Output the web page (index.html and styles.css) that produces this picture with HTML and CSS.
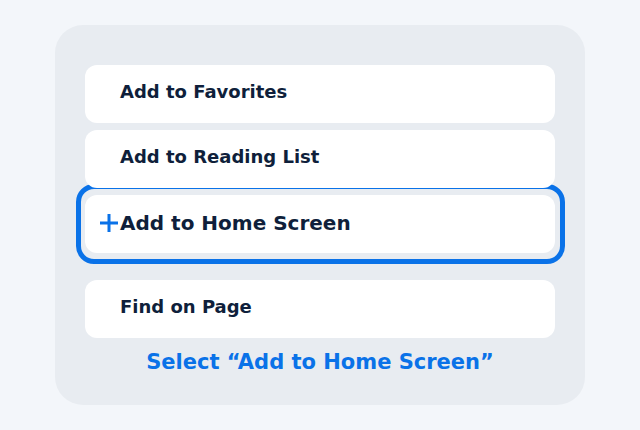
FILE: index.html
```html
<!DOCTYPE html>
<html lang="en">
  <head>
    <meta charset="UTF-8" />
    <meta name="viewport" content="width=device-width, initial-scale=1.0" />
    <title>Add to Home Screen</title>
    <link rel="stylesheet" href="styles.css">
  </head>
  <body>
    <div class="card">
      <div class="menu-item">Add to Favorites</div>
      <div class="menu-item">Add to Reading List</div>
      <div class="highlight">
        <div class="menu-item active">
          <svg class="plus" width="20" height="20" viewBox="0 0 20 20">
            <path d="M10 1v18M1 10h18" stroke="#0a72e8" stroke-width="3" fill="none" />
          </svg>
          Add to Home Screen
        </div>
      </div>
      <div class="menu-item">Find on Page</div>
      <p class="hint">Select “Add to Home Screen”</p>
    </div>
  </body>
</html>
```

FILE: styles.css
```css
body {
  font-family: "DejaVu Sans", sans-serif;
  margin: 0;
  padding: 0;
  background-color: #f3f6fa;
}

.card {
  width: 530px;
  height: 380px;
  box-sizing: border-box;
  margin: 25px auto 0;
  padding: 40px 30px;
  background-color: #e8ecf1;
  border-radius: 28px;
}

.menu-item {
  display: flex;
  align-items: center;
  height: 58px;
  box-sizing: border-box;
  padding: 0 0 6px 35px;
  margin-bottom: 7px;
  background-color: #fff;
  border-radius: 12px;
  color: #0f1f3b;
  font-size: 18px;
  font-weight: bold;
  position: relative;
}

.highlight {
  margin: -11px -10px 16px -9px;
  padding: 6px 5px 6px 4px;
  border: 5px solid #0a72e8;
  border-radius: 18px;
}

.active {
  margin-bottom: 0;
  padding-bottom: 3px;
  font-size: 20px;
}

.plus {
  position: absolute;
  left: 14px;
  top: 18px;
}

.hint {
  margin: 12px 0 0;
  text-align: center;
  color: #0a72e8;
  font-size: 21px;
  line-height: 24px;
  font-weight: bold;
}
```
